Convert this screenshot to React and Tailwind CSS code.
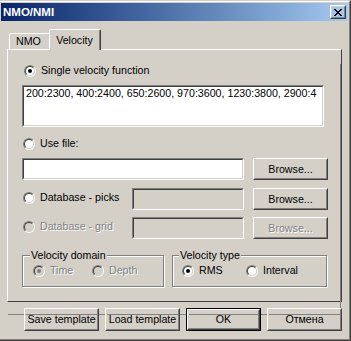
import React from "react";

const DIS = "text-[#808080] [text-shadow:1px_1px_0_#ffffff]";

function Radio({ checked, disabled }) {
  return (
    <span className="block w-[12px] h-[12px] shrink-0 rounded-full border border-t-[#808080] border-l-[#808080] border-r-white border-b-white">
      <span
        className={`flex items-center justify-center w-full h-full rounded-full border border-t-[#404040] border-l-[#404040] border-r-[#d4d0c8] border-b-[#d4d0c8] ${
          disabled ? "bg-[#d4d0c8]" : "bg-white"
        }`}
      >
        {checked && (
          <span className={`block w-[4px] h-[4px] rounded-full ${disabled ? "bg-[#808080]" : "bg-black"}`} />
        )}
      </span>
    </span>
  );
}

function RadioLabel({ checked, disabled, label, className = "" }) {
  return (
    <div className={`flex items-center h-[13px] ${className}`}>
      <Radio checked={checked} disabled={disabled} />
      <span className={`ml-[5px] whitespace-nowrap ${disabled ? DIS : ""}`}>{label}</span>
    </div>
  );
}

function Sunken({ className = "", bg = "bg-white", children }) {
  return (
    <div className={`shrink-0 border border-t-[#808080] border-l-[#808080] border-r-white border-b-white ${className}`}>
      <div className={`h-full border border-t-[#404040] border-l-[#404040] border-r-[#d4d0c8] border-b-[#d4d0c8] ${bg}`}>
        {children}
      </div>
    </div>
  );
}

function Btn({ children, disabled, isDefault, className = "" }) {
  const inner = (
    <div className="h-full border border-t-white border-l-white border-r-[#404040] border-b-[#404040]">
      <div className="h-full flex items-center justify-center border border-t-[#d4d0c8] border-l-[#d4d0c8] border-r-[#808080] border-b-[#808080]">
        <span className={`whitespace-nowrap ${disabled ? DIS : ""}`}>{children}</span>
      </div>
    </div>
  );
  if (isDefault) return <div className={`shrink-0 border border-black ${className}`}>{inner}</div>;
  return <div className={`shrink-0 ${className}`}>{inner}</div>;
}

function CloseGlyph() {
  const px = [
    [0, 0], [1, 0], [6, 0], [7, 0],
    [1, 1], [2, 1], [5, 1], [6, 1],
    [2, 2], [3, 2], [4, 2], [5, 2],
    [3, 3], [4, 3],
    [2, 4], [3, 4], [4, 4], [5, 4],
    [1, 5], [2, 5], [5, 5], [6, 5],
    [0, 6], [1, 6], [6, 6], [7, 6],
  ];
  return (
    <svg width="8" height="7" viewBox="0 0 8 7" shapeRendering="crispEdges">
      {px.map(([x, y], i) => (
        <rect key={i} x={x} y={y} width="1" height="1" fill="#000" />
      ))}
    </svg>
  );
}

function Group({ label, className = "", children, labelLeft = "left-[7px]" }) {
  return (
    <div className={`relative shrink-0 h-[32px] border border-[#808080] shadow-[inset_1px_1px_0_#ffffff,1px_1px_0_#ffffff] ${className}`}>
      <span className={`absolute -top-[7px] ${labelLeft} px-[1px] bg-[#d4d0c8] leading-[13px] whitespace-nowrap`}>
        {label}
      </span>
      {children}
    </div>
  );
}

export default function App() {
  return (
    <div className="w-[351px] h-[341px] bg-[#d4d0c8] border-r border-b border-r-[#404040] border-b-[#404040] border-t border-t-[#d4d0c8] text-black font-['Liberation_Sans',Arial,sans-serif] text-[10.67px] leading-[13px] overflow-hidden">
      <div className="h-full border-t border-r border-b border-t-white border-r-[#808080] border-b-[#808080] pt-[1px] pl-[1px] pr-[1px]">
        {/* Title bar */}
        <div className="h-[18px] flex items-center justify-between bg-linear-to-r from-[#0a246a] to-[#a6caf0] pl-[2px] pr-[2px]">
          <span className="text-white font-bold text-[11.5px] leading-[14px]">NMO/NMI</span>
          <Btn className="w-[16px] h-[14px]">
            <span className="flex items-center justify-center">
              <CloseGlyph />
            </span>
          </Btn>
        </div>

        <div className="pl-[6px]">
          {/* Tabs */}
          <div className="mt-[8px] h-[20px] flex items-end pl-[2px]">
            <div className="w-[41px] h-[16px] border-t border-l border-r border-t-white border-l-white border-r-[#404040] rounded-tl-[2px] pl-[6px] pt-[1px]">
              NMO
            </div>
            <div className="relative z-10 -mb-[1px] -ml-[1px] w-[52px] h-[21px] bg-[#d4d0c8] border-t border-l border-r border-t-white border-l-white border-r-[#404040] rounded-t-[2px]">
              <div className="h-full border-r border-r-[#808080] pt-[4px] text-center">Velocity</div>
            </div>
          </div>

          {/* Panel */}
          <div className="w-[335px] h-[253px] border border-t-white border-l-white border-r-[#404040] border-b-[#404040]">
            <div className="h-full border-r border-b border-r-[#808080] border-b-[#808080] pl-[14px]">
              <RadioLabel checked label="Single velocity function" className="mt-[14px] ml-[2px]" />

              <Sunken className="mt-[8px] w-[302px] h-[42px]">
                <div className="pl-[2px] overflow-hidden whitespace-nowrap">
                  200:2300, 400:2400, 650:2600, 970:3600, 1230:3800, 2900:4
                </div>
              </Sunken>

              <RadioLabel label="Use file:" className="mt-[10px] ml-[1px]" />

              <div className="mt-[8px] h-[22px] flex">
                <Sunken className="w-[222px] h-[22px]" />
                <Btn className="ml-[9px] w-[75px] h-[22px]">Browse...</Btn>
              </div>

              <div className="mt-[8px] h-[22px] flex items-center">
                <div className="w-[110px] pl-[1px] pb-[3px]">
                  <RadioLabel label="Database - picks" />
                </div>
                <Sunken className="w-[112px] h-[22px]" bg="bg-[#d4d0c8]" />
                <Btn className="ml-[9px] w-[75px] h-[22px]">Browse...</Btn>
              </div>

              <div className="mt-[7px] h-[22px] flex items-center">
                <div className="w-[110px] pl-[1px] pb-[3px]">
                  <RadioLabel label="Database - grid" disabled />
                </div>
                <Sunken className="w-[112px] h-[22px]" bg="bg-[#d4d0c8]" />
                <Btn className="ml-[9px] w-[75px] h-[22px]" disabled>
                  Browse...
                </Btn>
              </div>

              <div className="mt-[16px] flex">
                <Group label="Velocity domain" className="w-[142px]">
                  <div className="mt-[8px] pl-[10px] flex">
                    <RadioLabel checked disabled label="Time" className="w-[59px]" />
                    <RadioLabel disabled label="Depth" />
                  </div>
                </Group>
                <Group label="Velocity type" className="ml-[8px] w-[155px]" labelLeft="left-[6px]">
                  <div className="mt-[8px] pl-[9px] flex">
                    <RadioLabel checked label="RMS" className="w-[64px]" />
                    <RadioLabel label="Interval" />
                  </div>
                </Group>
              </div>
            </div>
          </div>
        </div>

        {/* Bottom buttons */}
        <div className="mt-[6px] pl-[23px] flex gap-[6px]">
          <Btn className="w-[75px] h-[23px]">Save template</Btn>
          <Btn className="w-[75px] h-[23px]">Load template</Btn>
          <Btn isDefault className="w-[75px] h-[23px]">OK</Btn>
          <Btn className="w-[75px] h-[23px]">Отмена</Btn>
        </div>
      </div>
    </div>
  );
}
